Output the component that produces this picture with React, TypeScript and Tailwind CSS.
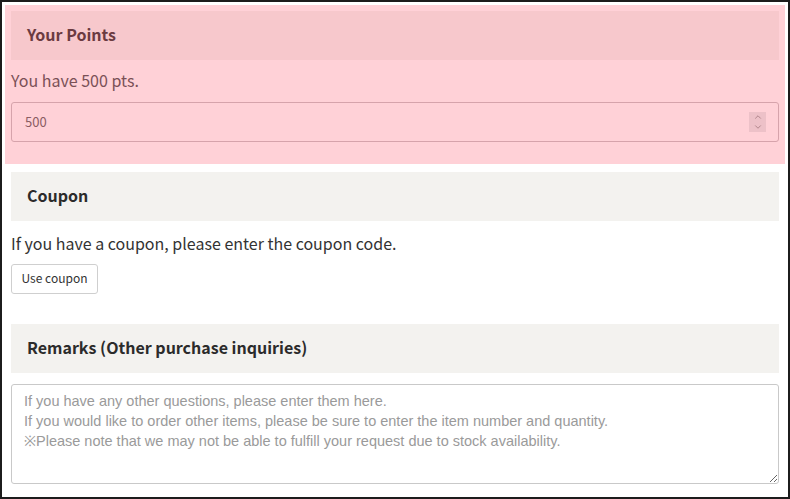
import { ChevronDown, ChevronUp } from 'lucide-react'

const jp = { fontFamily: '"Noto Sans CJK JP", "Noto Sans", sans-serif' }

function SectionHeader({ title, tone }: { title: string; tone: 'pink' | 'gray' }) {
  return (
    <div
      className={
        tone === 'pink'
          ? 'flex h-[49px] items-center bg-[#f7c8cc] px-4 pb-[4px] text-[16px] font-bold text-[#6b3b41]'
          : 'flex h-[49px] items-center bg-[#f3f2ef] px-4 pb-[4px] text-[16px] font-bold text-[#2b2b2b]'
      }
    >
      {title}
    </div>
  )
}

export default function App() {
  return (
    <div
      className="h-[499px] w-[790px] overflow-hidden border-2 border-[#1c1c1c] bg-white p-[3px]"
      style={jp}
    >
      {/* points */}
      <section className="bg-[#ffd1d7] px-[6px] pb-[22px] pt-[6px]">
        <SectionHeader title="Your Points" tone="pink" />
        <p className="mt-[8px] text-[16px] leading-6 text-[#7a5056]">You have 500 pts.</p>
        <div className="mt-[10px] flex h-10 items-center justify-between rounded-[3px] border border-[#d6a3ab] pl-[13px] pr-[12px]">
          <span className="text-[13px] text-[#8b5d63]">500</span>
          <span className="flex h-[20px] w-[17px] flex-col items-center justify-center bg-[#edc1c8] text-[#a57a80]">
            <ChevronUp size={10} strokeWidth={2} />
            <ChevronDown size={10} strokeWidth={2} />
          </span>
        </div>
      </section>

      {/* coupon */}
      <section className="mt-[8px] px-[6px]">
        <SectionHeader title="Coupon" tone="gray" />
        <p className="mt-[10px] text-[16px] leading-6 text-[#333]">
          If you have a coupon, please enter the coupon code.
        </p>
        <button className="mt-[9px] h-[30px] w-[87px] rounded-[3px] border border-[#cfcfcf] bg-white pb-[2px] text-[12px] text-[#333]">
          Use coupon
        </button>
      </section>

      {/* remarks */}
      <section className="mt-[30px] px-[6px]">
        <SectionHeader title="Remarks (Other purchase inquiries)" tone="gray" />
        <textarea
          className="mt-[11px] block h-[100px] w-full resize-y rounded-[3px] border border-[#c9c9c9] px-3 py-[6px] text-[14.5px] leading-5 text-[#333] placeholder:text-[#9a9a9a]"
          style={{ fontFamily: '"Liberation Sans", Arial, sans-serif' }}
          placeholder={
            'If you have any other questions, please enter them here.\nIf you would like to order other items, please be sure to enter the item number and quantity.\n※Please note that we may not be able to fulfill your request due to stock availability.'
          }
        />
      </section>
    </div>
  )
}
